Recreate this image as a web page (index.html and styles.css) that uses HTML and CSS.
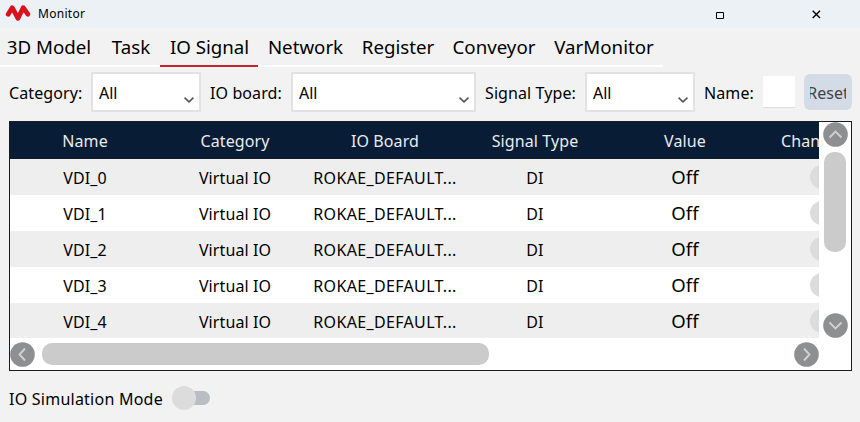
FILE: index.html
```html
<!DOCTYPE html>
<html lang="en">
<head>
<meta charset="utf-8">
<title>Monitor</title>
<link rel="stylesheet" href="styles.css">
</head>
<body>
<header class="titlebar">
  <svg class="logo" width="26" height="18" viewBox="0 0 26 18"><path d="M3.200 10.200 7.200 3.700 13 14.300 18.200 3.700 22.800 10.200" fill="none" stroke="#d7141e" stroke-width="4.800" stroke-linecap="round" stroke-linejoin="round"/></svg>
  <span class="title">Monitor</span>
  <svg class="max" width="8" height="8" viewBox="0 0 8 8"><path d="M.5 .5h7v6h-7z" fill="none" stroke="#000"/></svg>
  <svg class="close" width="9" height="9" viewBox="0 0 9 9"><path d="M.7 .7 8 8M8 .7.7 8" stroke="#000" stroke-width="1.4"/></svg>
</header>
<nav class="tabs">
  <span class="tab first">3D Model</span><span class="tab">Task</span><span class="tab active">IO Signal</span><span class="tab">Network</span><span class="tab">Register</span><span class="tab">Conveyor</span><span class="tab">VarMonitor</span>
</nav>
<section class="filters">
  <label>Category:</label>
  <div class="select"><span>All</span><svg width="10" height="6" viewBox="0 0 10 6"><path d="M.5.7 5 4.9 9.500.7"/></svg></div>
  <label>IO board:</label>
  <div class="select"><span>All</span><svg width="10" height="6" viewBox="0 0 10 6"><path d="M.5.7 5 4.9 9.500.7"/></svg></div>
  <label>Signal Type:</label>
  <div class="select"><span>All</span><svg width="10" height="6" viewBox="0 0 10 6"><path d="M.5.7 5 4.9 9.500.7"/></svg></div>
  <label>Name:</label>
  <div class="input"></div>
  <div class="button"><div class="clip"><span>Reset</span></div></div>
</section>
<main class="panel">
  <div class="table">
    <div class="row head"><span>Name</span><span>Category</span><span>IO Board</span><span>Signal Type</span><span>Value</span><span class="change">Change</span></div>
    <div class="row"><span>VDI_0</span><span>Virtual IO</span><span class="board">ROKAE_DEFAULT...</span><span>DI</span><span class="value">Off</span><span class="switch"><i></i></span></div>
    <div class="row"><span>VDI_1</span><span>Virtual IO</span><span class="board">ROKAE_DEFAULT...</span><span>DI</span><span class="value">Off</span><span class="switch"><i></i></span></div>
    <div class="row"><span>VDI_2</span><span>Virtual IO</span><span class="board">ROKAE_DEFAULT...</span><span>DI</span><span class="value">Off</span><span class="switch"><i></i></span></div>
    <div class="row"><span>VDI_3</span><span>Virtual IO</span><span class="board">ROKAE_DEFAULT...</span><span>DI</span><span class="value">Off</span><span class="switch"><i></i></span></div>
    <div class="row"><span>VDI_4</span><span>Virtual IO</span><span class="board">ROKAE_DEFAULT...</span><span>DI</span><span class="value">Off</span><span class="switch"><i></i></span></div>
  </div>
  <div class="vbar">
    <svg class="arrow" viewBox="0 0 25 25"><circle cx="12.500" cy="12.500" r="12.300"/><path d="M6.500 15.500 12.500 9.500 18.500 15.500"/></svg>
    <div class="vthumb"></div>
    <svg class="arrow end" viewBox="0 0 25 25"><circle cx="12.500" cy="12.500" r="12.300"/><path d="M6.500 9.500 12.500 15.500 18.500 9.500"/></svg>
  </div>
  <div class="hbar">
    <svg class="arrow" viewBox="0 0 25 25"><circle cx="12.500" cy="12.500" r="12.300"/><path d="M15 6.500 9.500 12.500 15 18.500"/></svg>
    <div class="hthumb"></div>
    <svg class="arrow right" viewBox="0 0 25 25"><circle cx="12.500" cy="12.500" r="12.300"/><path d="M10 6.500 15.500 12.500 10 18.500"/></svg>
  </div>
</main>
<footer class="mode"><span>IO Simulation Mode</span><svg width="39" height="24" viewBox="0 0 39 24"><rect x="10" y="5" width="28" height="14" rx="7" fill="#b9bec4"/><circle cx="12" cy="12" r="12" fill="#dcdcdc"/></svg></footer>
</body>
</html>
```
FILE: styles.css
```css
* { box-sizing: border-box; }
body {
  margin: 0;
  width: 860px;
  height: 422px;
  overflow: hidden;
  background: #f2f2f2;
  color: #000;
  font: 16px/20px "Noto Sans", "Open Sans", sans-serif;
  white-space: nowrap;
}
svg { display: block; flex: none; }
.titlebar {
  display: flex;
  align-items: center;
  height: 28px;
  padding-left: 5px;
  background: #ecf1f6;
}
.logo { margin-top: -2px; }
.title { width: 87px; margin-left: 7px; font-size: 12px; letter-spacing: .3px; }
.max { margin: 3px 0 0 591px; }
.close { margin-left: 88px; }
.tabs {
  display: grid;
  grid-template-columns: 101px 59px 98px 94px 91px 101px 119px;
  width: 663px;
  height: 39px;
}
.tab {
  padding: 7px 0 0 1px;
  border-bottom: 2px solid #fff;
  text-align: center;
  font-size: 18.7px;
  line-height: 24px;
}
.tab.first { padding-right: 4px; }
.tab.active { border-color: #c4242e; }
.filters {
  display: grid;
  grid-template-columns: 82px 110px 90px 185px 109px 110px 67px 42px 48px;
  align-items: center;
  height: 50px;
  margin-bottom: 4px;
  padding-left: 9px;
}
.filters label { padding-top: 1px; letter-spacing: .1px; }
.filters label:not(:first-child) { padding-left: 9px; }
.select {
  display: flex;
  align-items: center;
  justify-content: space-between;
  height: 40px;
  padding: 0 5px 0 6px;
  border: 2px solid #e2e2e2;
  background: #fff;
}
.select svg { margin-top: 16px; fill: none; stroke: #555; stroke-width: 1.6; }
.select span { padding-top: 1px; }
.input { width: 32px; height: 32px; margin-left: 1px; background: #fff; border-bottom: 1px solid #ddd; }
.button {
  height: 36px;
  padding: 9px 6px 7px;
  border-radius: 6px;
  background: #d3dbe6;
  color: #444;
}
.clip { display: flex; justify-content: center; overflow: hidden; }
.panel {
  display: grid;
  grid-template-columns: 809px 32px;
  grid-template-rows: 216px 32px;
  width: 843px;
  height: 250px;
  margin-left: 9px;
  border: 1px solid #1c1c20;
  background: #fff;
}
.table { overflow: hidden; }
.row {
  display: grid;
  grid-template-columns: repeat(6, 150px);
  align-items: center;
  height: 36px;
  text-align: center;
}
.row span { padding-top: 2px; letter-spacing: .1px; }
.row:nth-child(even) { background: #eee; }
.row.head { height: 37px; background: #081c36; color: #e8ebef; border-bottom: 1px solid #111923; }
.row .change { padding-left: 21px; text-align: left; }
.row .board { letter-spacing: .35px; }
.row .value { padding-top: 0; font-size: 18.500px; }
.row .switch { padding-top: 0; }
.switch i { display: block; width: 24px; height: 24px; margin: -1px 0 0 50px; border-radius: 50%; background: #dcdcdc; }
.vbar { display: flex; flex-direction: column; padding-left: 4px; }
.arrow { width: 25px; height: 25px; }
.arrow circle { fill: #8e8f91; }
.arrow path { fill: none; stroke: #d0d0d0; stroke-width: 1.9; }
.vthumb { width: 22px; height: 100px; margin: 5px 0 0 1px; border-radius: 10px; background: #cbcbcb; }
.end { margin-top: 61px; }
.hbar { grid-column: 1 / -1; display: flex; align-items: flex-start; padding-top: 4px; }
.hthumb { width: 447px; height: 22px; margin: 1px 0 0 7px; border-radius: 10px; background: #cbcbcb; }
.right { margin-left: 305px; }
.mode { display: flex; align-items: center; height: 54px; padding-left: 9px; }
.mode span { width: 163px; padding-top: 2px; letter-spacing: .24px; }
```
